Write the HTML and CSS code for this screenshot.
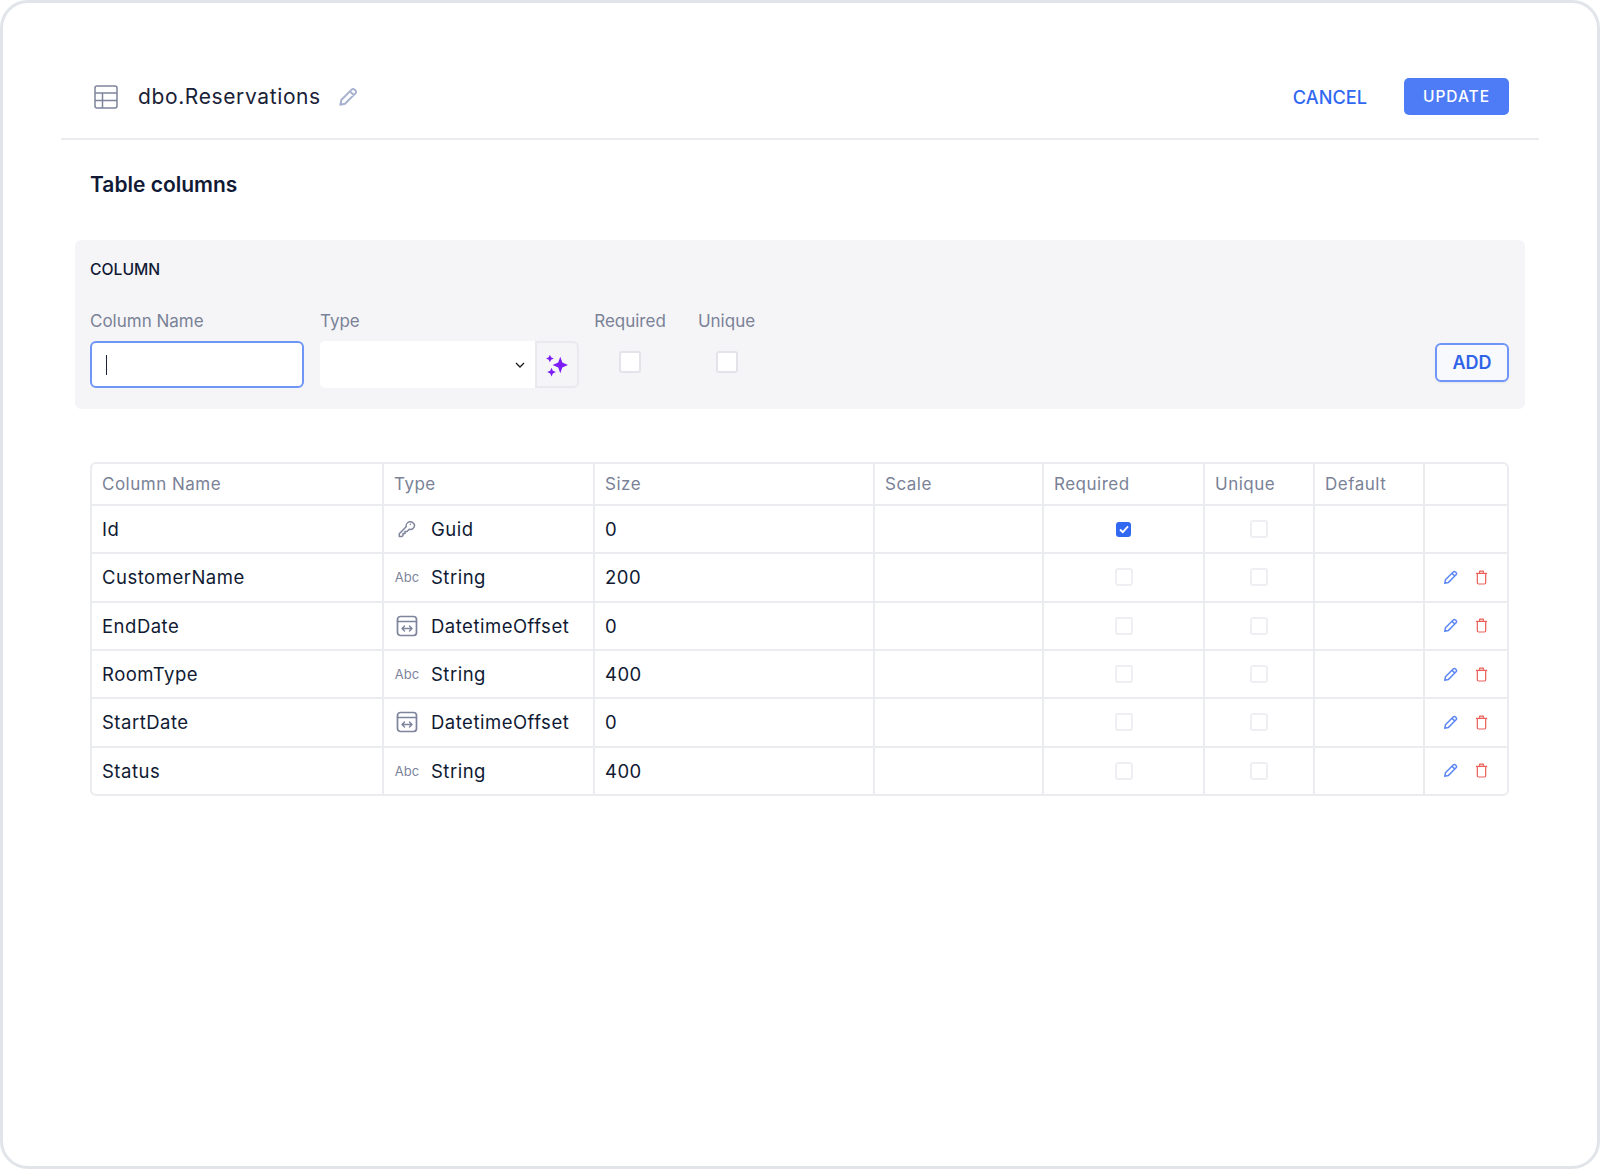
FILE: index.html
```html
<!DOCTYPE html>
<html lang="en">
<head>
<meta charset="utf-8">
<title>dbo.Reservations</title>
<link rel="stylesheet" href="styles.css">
</head>
<body>
<svg class="sprites" aria-hidden="true">
  <symbol id="pencil" viewBox="0 0 20 20"><path d="M13.6 2.6a2.1 2.1 0 0 1 3 0l.8.8a2.1 2.1 0 0 1 0 3L7 16.8l-4.6 1 .9-4.8L13.6 2.6Z M12 4.4l3.8 3.8" fill="none" stroke="currentColor" stroke-width="2" stroke-linejoin="round"/></symbol>
  <symbol id="trash" viewBox="0 0 14 16"><path d="M1 3.500h12M5 3.500V1.200h4v2.300M2.500 3.500v10.200c0 .8.500 1.300 1.300 1.300h6.400c.8 0 1.300-.5 1.300-1.300V3.500" fill="none" stroke="currentColor" stroke-width="1.300" stroke-linejoin="round"/></symbol>
  <symbol id="key" viewBox="0 0 20 20"><path d="M17.600 6.300a4.200 4.200 0 0 1-5.400 4L10 12.500H8v2H6v2l-1 1H2.300v-2.800l6.900-6.900a4.200 4.200 0 1 1 8.400-1.500Z M13.300 5.200h.1" fill="none" stroke="currentColor" stroke-width="1.500" stroke-linejoin="round" stroke-linecap="round"/></symbol>
  <symbol id="datetime" viewBox="0 0 22 22"><rect x="1.500" y="1.500" width="19" height="19" rx="3" fill="none" stroke="currentColor" stroke-width="1.700"/><path d="M1.500 6.500h19M6.500 13.500h9M8.500 11l-2.500 2.500 2.500 2.500M13.500 11l2.500 2.500-2.500 2.500" fill="none" stroke="currentColor" stroke-width="1.400" stroke-linecap="round" stroke-linejoin="round"/></symbol>
</svg>
<div class="frame">
  <header class="topbar">
    <div class="topbar-title">
      <svg class="table-icon" viewBox="0 0 24 24" aria-hidden="true"><rect x="1" y="1" width="22" height="22" rx="2" fill="none" stroke="currentColor" stroke-width="1.500"/><path d="M1 8h22M1 15.500h22M8.500 8v15" fill="none" stroke="currentColor" stroke-width="1.500"/></svg>
      <h1>dbo.Reservations</h1>
      <svg class="title-pencil"><use href="#pencil"/></svg>
    </div>
    <div class="topbar-actions">
      <button class="btn-text" type="button">CANCEL</button>
      <button class="btn-primary" type="button">UPDATE</button>
    </div>
  </header>

  <h2 class="section-title">Table columns</h2>

  <section class="panel">
    <h3 class="panel-title">COLUMN</h3>
    <div class="form-row">
      <div class="field field-name">
        <span class="label">Column Name</span>
        <div class="input"><span class="caret"></span></div>
      </div>
      <div class="field field-type">
        <span class="label">Type</span>
        <div class="select-group">
          <div class="select">
            <svg class="chevron" viewBox="0 0 10 6" aria-hidden="true"><path d="M1 1l4 4 4-4" fill="none" stroke="currentColor" stroke-width="1.300"/></svg>
          </div>
          <div class="ai-btn">
            <svg viewBox="0 0 22 22" aria-hidden="true"><path d="M14 3.500l1.900 5.100 5.100 2.400-5.100 2.400-1.900 5.100-1.900-5.100L7 11l5.100-2.400ZM4.500 1.500l1.100 2.400 2.400 1.100-2.400 1.100-1.100 2.400-1.100-2.400L1 5l2.400-1.100ZM6 13.500l1.200 2.800 2.800 1.200-2.800 1.200L6 21.500l-1.200-2.800L2 17.500l2.800-1.200Z" fill="#7c1cf5"/></svg>
          </div>
        </div>
      </div>
      <div class="field field-check field-required">
        <span class="label">Required</span>
        <span class="check-large"></span>
      </div>
      <div class="field field-check field-unique">
        <span class="label">Unique</span>
        <span class="check-large"></span>
      </div>
      <button class="btn-outline" type="button">ADD</button>
    </div>
  </section>

  <table class="grid">
    <colgroup>
      <col class="c-name"><col class="c-type"><col class="c-size"><col class="c-scale"><col class="c-req"><col class="c-uni"><col class="c-def"><col class="c-act">
    </colgroup>
    <thead>
      <tr><th>Column Name</th><th>Type</th><th>Size</th><th>Scale</th><th>Required</th><th>Unique</th><th>Default</th><th></th></tr>
    </thead>
    <tbody>
      <tr>
        <td>Id</td>
        <td><span class="type"><span class="type-icon"><svg class="i-key"><use href="#key"/></svg></span>Guid</span></td>
        <td>0</td><td></td>
        <td><span class="check checked"><svg viewBox="0 0 14 14" aria-hidden="true"><path d="M3 7.500l2.800 2.700L11 4.300" fill="none" stroke="#fff" stroke-width="1.800"/></svg></span></td>
        <td><span class="check"></span></td>
        <td></td><td></td>
      </tr>
      <tr>
        <td>CustomerName</td>
        <td><span class="type"><span class="type-icon abc">Abc</span>String</span></td>
        <td>200</td><td></td>
        <td><span class="check"></span></td><td><span class="check"></span></td><td></td>
        <td><span class="actions"><svg class="i-edit"><use href="#pencil"/></svg><svg class="i-del"><use href="#trash"/></svg></span></td>
      </tr>
      <tr>
        <td>EndDate</td>
        <td><span class="type"><span class="type-icon"><svg class="i-dt"><use href="#datetime"/></svg></span>DatetimeOffset</span></td>
        <td>0</td><td></td>
        <td><span class="check"></span></td><td><span class="check"></span></td><td></td>
        <td><span class="actions"><svg class="i-edit"><use href="#pencil"/></svg><svg class="i-del"><use href="#trash"/></svg></span></td>
      </tr>
      <tr>
        <td>RoomType</td>
        <td><span class="type"><span class="type-icon abc">Abc</span>String</span></td>
        <td>400</td><td></td>
        <td><span class="check"></span></td><td><span class="check"></span></td><td></td>
        <td><span class="actions"><svg class="i-edit"><use href="#pencil"/></svg><svg class="i-del"><use href="#trash"/></svg></span></td>
      </tr>
      <tr>
        <td>StartDate</td>
        <td><span class="type"><span class="type-icon"><svg class="i-dt"><use href="#datetime"/></svg></span>DatetimeOffset</span></td>
        <td>0</td><td></td>
        <td><span class="check"></span></td><td><span class="check"></span></td><td></td>
        <td><span class="actions"><svg class="i-edit"><use href="#pencil"/></svg><svg class="i-del"><use href="#trash"/></svg></span></td>
      </tr>
      <tr>
        <td>Status</td>
        <td><span class="type"><span class="type-icon abc">Abc</span>String</span></td>
        <td>400</td><td></td>
        <td><span class="check"></span></td><td><span class="check"></span></td><td></td>
        <td><span class="actions"><svg class="i-edit"><use href="#pencil"/></svg><svg class="i-del"><use href="#trash"/></svg></span></td>
      </tr>
    </tbody>
  </table>
</div>
</body>
</html>
```
FILE: styles.css
```css
* { box-sizing: border-box; }
html, body { margin: 0; padding: 0; background: #fff; }
body { font-family: Inter, "Liberation Sans", sans-serif; color: #101a33; }
.sprites { display: none; }

.frame {
  width: 1600px;
  height: 1169px;
  border: 3px solid #e1e4e9;
  border-radius: 28px;
  padding: 0 58px;
  background: #fff;
}

.topbar {
  display: flex;
  align-items: center;
  justify-content: space-between;
  height: 137px;
  padding: 52px 30px 0 33px;
  border-bottom: 2px solid #ebecf0;
}
.topbar-title { display: flex; align-items: center; }
.table-icon { width: 24px; height: 24px; color: #7d849c; }
h1 {
  margin: 0 0 0 20px;
  font-size: 21px;
  font-weight: 400;
  letter-spacing: 0.62px;
  line-height: 28px;
  color: #1a2238;
}
.title-pencil { width: 20px; height: 20px; margin-left: 17px; color: #a8b2cf; }
.topbar-actions { display: flex; align-items: center; gap: 37px; }
.btn-text {
  border: 0;
  background: none;
  padding: 0;
  font: 500 18.200px Inter, sans-serif;
  color: #3168f2;
}
.btn-primary {
  width: 105px;
  height: 37px;
  border: 0;
  border-radius: 5px;
  background: #4d7cf6;
  color: #fff;
  font: 500 15.500px Inter, sans-serif;
  letter-spacing: 1px;
}

.section-title {
  margin: 31px 0 0 29px;
  font-size: 21px;
  font-weight: 600;
  line-height: 28px;
  color: #111a35;
}

.panel {
  height: 169px;
  margin: 41px 14px 0 14px;
  padding: 20px 16px 0 15px;
  background: #f5f5f8;
  border-radius: 6px;
}
.panel-title {
  margin: 0;
  font-size: 15.700px;
  font-weight: 500;
  line-height: 20px;
  color: #111a35;
}
.form-row { display: flex; align-items: flex-start; margin-top: 31px; }
.field { display: flex; flex-direction: column; }
.label { font-size: 17px; line-height: 21px; color: #7a8297; }
.field-name { width: 214px; margin-right: 16px; }
.input {
  display: flex;
  align-items: center;
  height: 47px;
  margin-top: 9px;
  padding-left: 14px;
  background: #fff;
  border: 2px solid #6f95f7;
  border-radius: 6px;
}
.caret { width: 1px; height: 20px; background: #1a2238; }
.field-type { width: 259px; margin-right: 15px; }
.select-group {
  display: flex;
  height: 47px;
  margin-top: 9px;
}
.select {
  display: flex;
  align-items: center;
  justify-content: flex-end;
  flex: 1;
  padding-right: 10px;
  background: #fff;
  border-radius: 5px 0 0 5px;
}
.chevron { width: 10px; height: 6px; color: #1a1a1a; }
.ai-btn {
  display: flex;
  align-items: center;
  justify-content: center;
  width: 44px;
  border: 2px solid #e9e9ee;
  border-radius: 0 6px 6px 0;
}
.ai-btn svg { width: 24px; height: 24px; }
.field-check { align-items: center; }
.field-required { width: 72px; margin-right: 32px; }
.field-unique { width: 57px; }
.check-large {
  width: 22px;
  height: 22px;
  margin-top: 19px;
  background: #fff;
  border: 2px solid #e3e4e9;
  border-radius: 3px;
}
.btn-outline {
  width: 74px;
  height: 39px;
  margin: 32px 0 0 auto;
  border: 2px solid #6f95f7;
  border-radius: 6px;
  background: #f8f9fc;
  color: #2f63e8;
  font: 600 18px Inter, sans-serif;
  box-shadow: 0 1px 2px rgba(30, 50, 100, 0.08);
}

.grid {
  width: 1419px;
  margin: 53px 0 0 29px;
  border-collapse: separate;
  border-spacing: 0;
  table-layout: fixed;
  border: 2px solid #ebecf0;
  border-radius: 6px;
}
.c-name { width: 292px; }
.c-type { width: 211px; }
.c-size { width: 280px; }
.c-scale { width: 169px; }
.c-req { width: 161px; }
.c-uni { width: 110px; }
.c-def { width: 110px; }
.grid th, .grid td {
  padding: 0 10px;
  border-right: 2px solid #ebecf0;
  border-bottom: 2px solid #ebecf0;
  font-size: 18.500px;
  letter-spacing: 0.5px;
  text-align: left;
}
.grid th { height: 42px; font-weight: 400; font-size: 17px; color: #7a8297; }
.grid td { height: 48.330px; color: #101a33; }
.grid tr > :last-child { border-right: 0; }
.grid tbody tr:last-child td { height: 46.500px; border-bottom: 0; }

.type { display: flex; align-items: center; }
.type-icon {
  display: flex;
  align-items: center;
  justify-content: center;
  width: 24px;
  margin: 0 12px 0 1px;
  color: #7d849c;
}
.abc { font-size: 13px; letter-spacing: 0; }
.i-key { width: 20px; height: 20px; }
.i-dt { width: 22px; height: 22px; }

.check {
  display: flex;
  align-items: center;
  justify-content: center;
  width: 18px;
  height: 18px;
  margin: 0 auto;
  border: 2px solid #eeeff2;
  border-radius: 3px;
  background: #fff;
}
.check.checked { width: 15px; height: 15px; background: #3168f2; border: 0; }
.check.checked svg { width: 14px; height: 14px; }

.actions { display: flex; align-items: center; gap: 17px; padding-left: 8px; }
.i-edit { width: 15px; height: 15px; color: #5d87f5; }
.i-del { width: 13px; height: 15px; color: #ea5f58; }
```
